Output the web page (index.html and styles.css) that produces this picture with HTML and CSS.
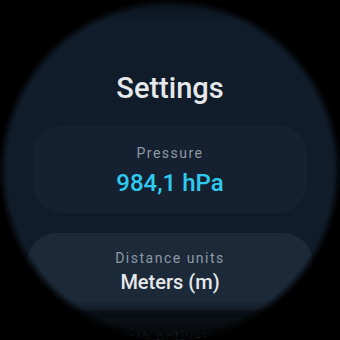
FILE: index.html
```html
<!DOCTYPE html>
<html>
<head>
<meta charset="utf-8">
<link rel="stylesheet" href="styles.css">
</head>
<body>
<div class="watch">
  <div class="column">
    <h1 class="title">Settings</h1>
    <div class="chip chip-pressure">
      <div class="label">Pressure</div>
      <div class="value accent">984,1 hPa</div>
    </div>
    <div class="chip chip-units">
      <div class="label">Distance units</div>
      <div class="value main">Meters (m)</div>
    </div>
    <div class="chip chip-depth">
      <div class="label">Depth activation</div>
    </div>
  </div>
  <div class="vignette"></div>
</div>
</body>
</html>
```
FILE: styles.css
```css
html, body {
  margin: 0;
  padding: 0;
  background: #000;
}
body {
  width: 340px;
  height: 340px;
  overflow: hidden;
  font-family: Roboto, "Noto Sans", sans-serif;
}
.watch {
  position: relative;
  width: 340px;
  height: 340px;
  border-radius: 50%;
  background: #101c2a;
  overflow: hidden;
}
.column {
  display: flex;
  flex-direction: column;
  align-items: center;
  padding-top: 71px;
}
.title {
  margin: 0;
  font-size: 29px;
  line-height: 34px;
  font-weight: 500;
  color: #e6e8ea;
}
.chip {
  box-sizing: border-box;
  display: flex;
  flex-direction: column;
  align-items: center;
  border-radius: 30px;
}
.chip-pressure {
  margin-top: 20px;
  width: 274px;
  height: 88px;
  padding-top: 19px;
  background: #152130;
}
.chip-units {
  margin-top: 20px;
  width: 286px;
  height: 77px;
  padding-top: 16px;
  background: #1b2939;
}
.chip-depth {
  margin-top: 8px;
  width: 286px;
  height: 70px;
  padding-top: 10px;
  background: #1b2939;
}
.label {
  font-size: 14px;
  line-height: 18px;
  letter-spacing: 1.5px;
  color: #8f99a4;
}
.value {
  font-weight: 500;
}
.accent {
  margin-top: 7px;
  font-size: 24px;
  line-height: 28px;
  color: #2fcbef;
}
.main {
  margin-top: 3px;
  font-size: 20px;
  line-height: 24px;
  color: #e6e8ea;
}
.vignette {
  position: absolute;
  inset: 0;
  pointer-events: none;
  background:
    radial-gradient(circle at 170px 170px, rgba(0,0,0,0) 163px, rgba(0,0,0,1) 171px),
    linear-gradient(to bottom, rgba(0,0,0,0.35) 0px, rgba(0,0,0,0) 22px, rgba(0,0,0,0) 300px, rgba(0,0,0,0.6) 318px, rgba(0,0,0,0.88) 340px);
}
```
